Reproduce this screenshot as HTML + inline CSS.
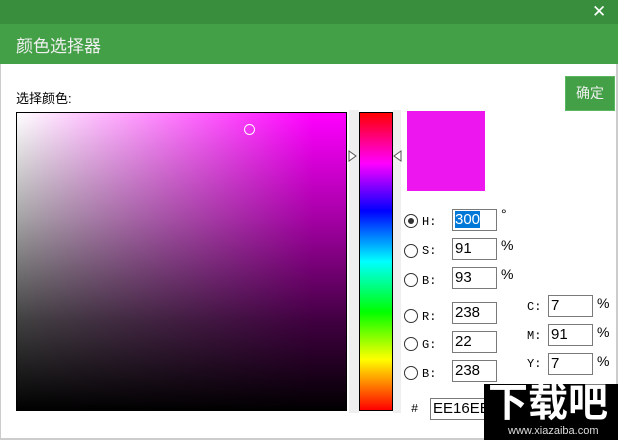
<!DOCTYPE html>
<html><head><meta charset="utf-8"><style>
*{margin:0;padding:0;box-sizing:border-box}
html,body{width:618px;height:440px;overflow:hidden}
body{background:#fff;font-family:"Liberation Sans","Noto Sans CJK SC",sans-serif;position:relative}
.a{position:absolute;white-space:nowrap}
.inp{position:absolute;width:45px;height:22px;border:1px solid #7a7a7a;background:#fff;font-size:15px;line-height:20px;padding-left:2px;color:#000;white-space:nowrap;overflow:hidden}
.lab{position:absolute;font-family:"Liberation Mono",monospace;font-size:12px}
.rad{position:absolute;width:14px;height:14px;border:1px solid #333;border-radius:50%;background:#fff}
.pct{position:absolute;font-size:14px}
</style></head><body>
<div class="a" style="left:0;top:0;width:618px;height:24px;background:#388e3c"></div>
<div class="a" style="left:592px;top:2px;color:#fff;font-size:17px">✕</div>
<div class="a" style="left:0;top:24px;width:618px;height:40px;background:#43a047"></div>
<div class="a" style="left:16px;top:32px;color:#f0f0f0;font-size:17px">颜色选择器</div>
<div class="a" style="left:0;top:64px;width:1px;height:376px;background:#ccc"></div>
<div class="a" style="left:616px;top:64px;width:2px;height:376px;background:#ccc"></div>
<div class="a" style="left:0;top:438px;width:618px;height:2px;background:#ccc"></div>
<div class="a" style="left:16px;top:88px;font-size:13px">选择颜色:</div>
<div class="a" style="left:565px;top:76px;width:50px;height:35px;background:#43a047;border:1px solid #5cb860;color:#eee;font-size:14px;text-align:center;line-height:33px">确定</div>
<div class="a" style="left:16px;top:112px;width:331px;height:299px;border:1px solid #000;border-bottom:none;background:linear-gradient(to bottom,rgba(0,0,0,0),rgba(0,0,0,.35) 35%,rgba(0,0,0,.75) 70%,#000),linear-gradient(to right,#fff,#f0f 90%)"></div>
<div class="a" style="left:244px;top:124px;width:11px;height:11px;border:1px solid #fff;border-radius:50%"></div>
<div class="a" style="left:349px;top:110px;width:10px;height:303px;background:#efefef"></div>
<div class="a" style="left:393px;top:110px;width:8px;height:303px;background:#efefef"></div>
<div class="a" style="left:359px;top:112px;width:34px;height:299px;border:1px solid #000;background:linear-gradient(to bottom,#f00,#f0f 17%,#00f 33%,#0ff 50%,#0f0 67%,#ff0 83%,#f00)"></div>
<svg class="a" style="left:348px;top:150px" width="10" height="12"><path d="M1 1 L8 6 L1 11Z" fill="#fff" stroke="#555"/></svg>
<svg class="a" style="left:393px;top:150px" width="10" height="12"><path d="M8 1 L1 6 L8 11Z" fill="#fff" stroke="#555"/></svg>
<div class="a" style="left:407px;top:111px;width:78px;height:80px;background:#ee16ee"></div>

<div class="rad" style="left:404px;top:214px"><div class="a" style="left:3px;top:3px;width:6px;height:6px;border-radius:50%;background:#333"></div></div>
<div class="rad" style="left:404px;top:244px"></div>
<div class="rad" style="left:404px;top:273px"></div>
<div class="rad" style="left:404px;top:309px"></div>
<div class="rad" style="left:404px;top:337px"></div>
<div class="rad" style="left:404px;top:366px"></div>
<div class="lab" style="left:422px;top:215px">H:</div>
<div class="lab" style="left:422px;top:244px">S:</div>
<div class="lab" style="left:422px;top:274px">B:</div>
<div class="lab" style="left:422px;top:310px">R:</div>
<div class="lab" style="left:422px;top:338px">G:</div>
<div class="lab" style="left:422px;top:367px">B:</div>
<div class="inp" style="left:452px;top:209px"><span style="background:#0078d7;color:#fff">300</span></div>
<div class="inp" style="left:452px;top:238px">91</div>
<div class="inp" style="left:452px;top:267px">93</div>
<div class="inp" style="left:452px;top:302px">238</div>
<div class="inp" style="left:452px;top:331px">22</div>
<div class="inp" style="left:452px;top:360px">238</div>
<div class="pct" style="left:501px;top:206px">°</div>
<div class="pct" style="left:501px;top:237px">%</div>
<div class="pct" style="left:501px;top:266px">%</div>
<div class="lab" style="left:527px;top:300px">C:</div>
<div class="lab" style="left:527px;top:329px">M:</div>
<div class="lab" style="left:527px;top:357px">Y:</div>
<div class="inp" style="left:548px;top:295px">7</div>
<div class="inp" style="left:548px;top:324px">91</div>
<div class="inp" style="left:548px;top:353px">7</div>
<div class="pct" style="left:597px;top:295px">%</div>
<div class="pct" style="left:597px;top:324px">%</div>
<div class="pct" style="left:597px;top:353px">%</div>
<div class="lab" style="left:411px;top:402px">#</div>
<div class="inp" style="left:430px;top:398px;width:60px">EE16EE</div>
<div class="a" style="left:484px;top:384px;width:134px;height:56px;background:#000;color:#fff;overflow:hidden">
<div class="a" style="left:4px;top:-4px;font-size:40px;font-weight:bold;letter-spacing:0;line-height:46px">下载吧</div>
<div class="a" style="left:24px;top:41px;font-size:11px;color:#ddd">www.xiazaiba.com</div>
</div>
</body></html>
